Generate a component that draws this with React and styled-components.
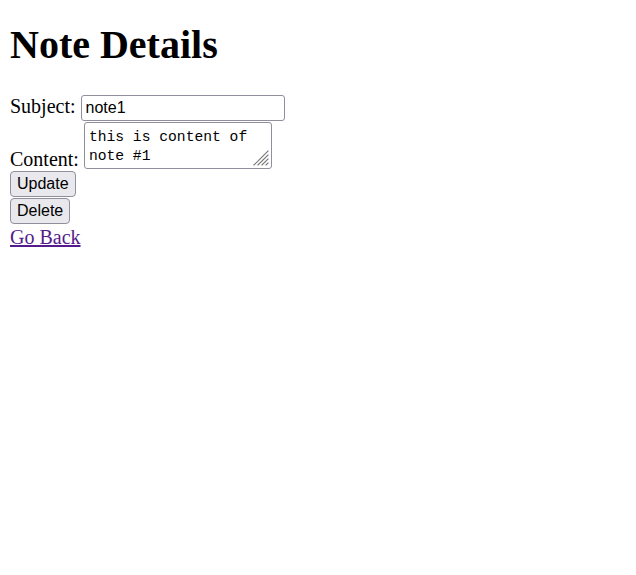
import React, { useState } from 'react';
import styled, { createGlobalStyle } from 'styled-components';

const GlobalStyle = createGlobalStyle`
  body {
    margin: 8px;
    font-family: "Liberation Serif", "Times New Roman", serif;
    font-size: 20px;
    color: #000;
    background: #fff;
  }
`;

const Page = styled.div`
  padding: 0 2px;
`;

const Title = styled.h1`
  font-size: 40px;
  font-weight: bold;
  margin: 13px 0 27px;
`;

const Field = styled.div`
  line-height: normal;
`;

const ButtonRow = styled.div`
  line-height: normal;
  margin-bottom: 1px;
`;

const Label = styled.label`
  margin-right: 5px;
`;

const TextInput = styled.input`
  width: 204px;
  height: 26px;
  box-sizing: border-box;
  padding: 1px 4px;
  margin: 0;
  font-family: "Liberation Sans", Arial, sans-serif;
  font-size: 16px;
  color: #000;
  border: 1px solid #8f8f9d;
  border-radius: 3px;
`;

const AreaWrap = styled.span`
  position: relative;
  display: inline-block;
  vertical-align: -3px;
  margin-top: 1px;
`;

const TextArea = styled.textarea`
  display: block;
  width: 188px;
  height: 47px;
  box-sizing: border-box;
  margin: 0;
  padding: 5px 4px 2px;
  font-family: "Liberation Mono", "Courier New", monospace;
  font-size: 14.67px;
  line-height: 19px;
  color: #000;
  border: 1px solid #8f8f9d;
  border-radius: 3px;
  overflow: hidden;
  resize: none;
`;

const Grip = styled.svg`
  position: absolute;
  right: 3px;
  bottom: 3px;
  width: 16px;
  height: 16px;
  pointer-events: none;
`;

const Button = styled.button`
  display: inline-block;
  font-family: "Liberation Sans", Arial, sans-serif;
  font-size: 16px;
  padding: 1px 6px;
  margin: 0;
  height: 26px;
  color: #000;
  background: #e9e9ed;
  border: 1px solid #8f8f9d;
  border-radius: 4px;
`;

const BackLink = styled.a`
  display: inline-block;
  margin-top: 1px;
  color: #551a8b;
  text-decoration: underline;
`;

export default function App() {
  const [subject, setSubject] = useState('note1');
  const [content, setContent] = useState('this is content of note #1');

  return (
    <Page>
      <GlobalStyle />
      <Title>Note Details</Title>
      <Field>
        <Label>Subject:</Label>
        <TextInput value={subject} onChange={(e) => setSubject(e.target.value)} />
      </Field>
      <Field>
        <Label>Content:</Label>
        <AreaWrap>
          <TextArea value={content} onChange={(e) => setContent(e.target.value)} />
          <Grip viewBox="0 0 16 16">
            <g stroke="#777" strokeWidth="1.2" strokeLinecap="square">
              <line x1="1" y1="15" x2="15" y2="1" />
              <line x1="5" y1="15" x2="15" y2="5" />
              <line x1="9" y1="15" x2="15" y2="9" />
              <line x1="13" y1="15" x2="15" y2="13" />
            </g>
          </Grip>
        </AreaWrap>
      </Field>
      <ButtonRow>
        <Button type="button">Update</Button>
      </ButtonRow>
      <ButtonRow>
        <Button type="button">Delete</Button>
      </ButtonRow>
      <BackLink href="#">Go Back</BackLink>
    </Page>
  );
}
